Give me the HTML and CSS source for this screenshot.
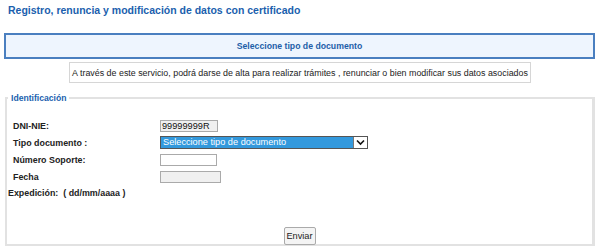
FILE: index.html
```html
<!DOCTYPE html>
<html lang="es">
<head>
<meta charset="utf-8">
<link rel="stylesheet" href="styles.css">
</head>
<body>
<div class="page">
  <h1 class="title">Registro, renuncia y modificación de datos con certificado</h1>
  <div class="banner">Seleccione tipo de documento</div>
  <div class="info-wrap"><div class="info">A través de este servicio, podrá darse de alta para realizar trámites , renunciar o bien modificar sus datos asociados</div></div>
  <fieldset class="ident">
    <legend>Identificación</legend>
    <div class="rows">
      <div class="row r1"><span class="lbl">DNI-NIE:</span><span class="inp dni">99999999R</span></div>
      <div class="row r2"><span class="lbl">Tipo documento :</span>
        <span class="sel"><span class="sel-text">Seleccione tipo de documento</span><span class="sel-btn"><svg width="9" height="7" viewBox="0 0 9 7"><path d="M1 1.5 L4.5 5 L8 1.5" fill="none" stroke="#111" stroke-width="1.6"/></svg></span></span>
      </div>
      <div class="row r3"><span class="lbl">Número Soporte:</span><span class="inp soporte"></span></div>
      <div class="row r4"><span class="lbl">Fecha</span><span class="inp fecha"></span></div>
      <div class="row r5"><span class="lbl2">Expedición:&nbsp; ( dd/mm/aaaa )</span></div>
    </div>
    <div class="actions"><button class="btn">Enviar</button></div>
  </fieldset>
</div>
</body>
</html>
```
FILE: styles.css
```css
html, body { margin: 0; padding: 0; background: #fff; }
body { font-family: "Liberation Sans", Arial, sans-serif; color: #222; }
.page { width: 598px; height: 251px; position: relative; overflow: hidden; }
.title { margin: 0; padding: 4px 0 0 8px; height: 33px; box-sizing: border-box; font-size: 10.5px; font-weight: bold; color: #1b5fae; line-height: 13px; }
.banner { margin: 0 3px 0 4px; height: 26px; box-sizing: border-box; border: 2px solid #4a7fc0; background: #eef5fe; color: #1d5ea8; font-weight: bold; font-size: 8.7px; display: flex; align-items: center; justify-content: center; }
.info-wrap { display: flex; justify-content: center; padding-top: 3px; }
.info { width: 462px; height: 21px; box-sizing: border-box; border: 1px solid #d6d6d6; font-size: 8.9px; color: #222; display: flex; align-items: center; justify-content: center; margin-left: 2px; white-space: nowrap; }
.ident { margin: 10px 3px 0 5px; border: 2px solid #e2e2e2; border-right-width: 3px; padding: 0; height: 153px; box-sizing: border-box; position: relative; }
.ident legend { color: #1b5fae; font-weight: bold; font-size: 8.6px; padding: 0 3px; margin-left: 1px; }
.rows { padding-top: 14px; }
.row { display: flex; align-items: center; height: 17px; }
.lbl { width: 147px; padding-left: 6px; font-size: 8.9px; font-weight: bold; color: #222; }
.lbl2 { padding-left: 1px; font-size: 8.9px; font-weight: bold; color: #222; }
.r5 { height: 14px; align-items: flex-start; padding-top: 3px; }
.inp { box-sizing: border-box; height: 12px; border: 1px solid #aaa; font-size: 9.2px; line-height: 10px; padding-left: 1px; color: #111; }
.dni { width: 58px; background: #f0f0f0; }
.soporte { width: 57px; background: #fff; }
.fecha { width: 61px; background: #f0f0f0; }
.sel { width: 208px; height: 13px; box-sizing: border-box; border: 1px solid #555; background: #3399dd; display: flex; align-items: center; }
.sel-text { flex: 1; color: #fff; font-size: 9.2px; padding-left: 2px; line-height: 11px; }
.sel-btn { width: 13px; height: 11px; background: #fff; border-left: 1px solid #777; display: flex; align-items: center; justify-content: center; }
.actions { position: absolute; left: 0; right: 0; bottom: -1px; display: flex; justify-content: center; }
.btn { font-family: "Liberation Sans", Arial, sans-serif; font-size: 9.2px; height: 18px; width: 32px; padding: 0; border: 1px solid #aaa; border-radius: 2px; background: #f4f4f4; color: #222; }
```
